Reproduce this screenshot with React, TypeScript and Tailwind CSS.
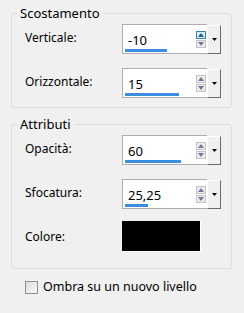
import React from "react";

const font = { fontFamily: '"Segoe UI", "Noto Sans", "Liberation Sans", sans-serif' };

function Spin({ hot }: { hot?: boolean }) {
  return (
    <div className="flex flex-col gap-px">
      <div
        className={
          "w-[10px] h-[8px] border flex items-center justify-center " +
          (hot ? "border-[#3c7fb1] bg-[#dcecf8]" : "border-[#c3c3c3] bg-[#ececec]")
        }
      >
        <svg width="6" height="4" viewBox="0 0 6 4">
          <path d="M0 4 L3 0 L6 4 Z" fill={hot ? "#2d5f8b" : "#6e7b96"} />
        </svg>
      </div>
      <div className="w-[10px] h-[8px] border border-[#c3c3c3] bg-[#ececec] flex items-center justify-center">
        <svg width="6" height="4" viewBox="0 0 6 4">
          <path d="M0 0 L6 0 L3 4 Z" fill="#6e7b96" />
        </svg>
      </div>
    </div>
  );
}

function NumField({ value, bar, hot }: { value: string; bar: number; hot?: boolean }) {
  return (
    <div className="flex items-start">
      <div className="relative w-[85px] h-[30px] bg-white border border-[#abadb3] border-r-0 flex items-center pl-[5px] pr-[1px]">
        <span className="flex-1 text-[13px] text-black pt-[4px]">{value}</span>
        <Spin hot={hot} />
        <div className="absolute left-[2px] bottom-[1px] h-[3px] bg-[#3d8ee0]" style={{ width: bar }} />
      </div>
      <div className="w-[14px] h-[29px] mt-px bg-[#f0f0f0] border-t border-l border-t-white border-l-white border-r border-b border-r-[#6b6b6b] border-b-[#6b6b6b] flex items-center justify-center">
        <svg width="5" height="3" viewBox="0 0 5 3">
          <path d="M0 0 L5 0 L2.5 3 Z" fill="#000" />
        </svg>
      </div>
    </div>
  );
}

function Row({ label, children }: { label: string; children: React.ReactNode }) {
  return (
    <div className="flex items-start h-[30px]">
      <div className="w-[97px] text-[12px] text-black pt-[5px]">{label}</div>
      {children}
    </div>
  );
}

export default function App() {
  return (
    <div className="w-[244px] h-[313px] bg-[#f0f0f0] pt-[5px] text-[12px]" style={font}>
      <fieldset className="mx-[11px] w-[221px] border border-[#d5dfe5] rounded-[3px] pl-[13px] pb-[9px]">
        <legend className="-ml-[8px] px-[3px] leading-[16px] text-[13px] text-black">Scostamento</legend>
        <div className="flex flex-col gap-[14px] pt-[3px]">
          <Row label="Verticale:">
            <NumField value="-10" bar={42} hot />
          </Row>
          <Row label="Orizzontale:">
            <NumField value="15" bar={54} />
          </Row>
        </div>
      </fieldset>
      <fieldset className="mx-[11px] mt-[8px] w-[221px] border border-[#d5dfe5] rounded-[3px] pl-[13px] pb-[16px]">
        <legend className="-ml-[8px] px-[3px] leading-[16px] text-[13px] text-black">Attributi</legend>
        <div className="flex flex-col gap-[14px] pt-[3px]">
          <Row label="Opacità:">
            <NumField value="60" bar={56} />
          </Row>
          <Row label="Sfocatura:">
            <NumField value="25,25" bar={23} />
          </Row>
          <div className="flex items-center h-[31px] -mt-[2px]">
            <div className="w-[97px] text-[12px] text-black">Colore:</div>
            <div className="w-[79px] h-[31px] bg-black border-r border-b border-white" />
          </div>
        </div>
      </fieldset>
      <label className="flex items-center mt-[9px] ml-[25px] gap-[5px]">
        <span className="w-[13px] h-[13px] border border-[#8e8f8f] bg-gradient-to-br from-[#dcdcdc] to-[#f8f8f8]" />
        <span className="text-[12.5px] text-black">Ombra su un nuovo livello</span>
      </label>
    </div>
  );
}
